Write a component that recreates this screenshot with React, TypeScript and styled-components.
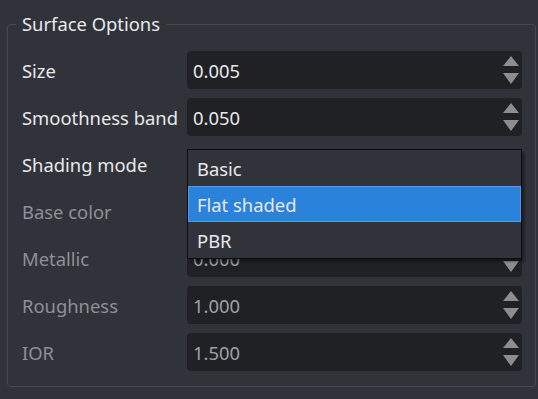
import React from "react";
import styled, { createGlobalStyle } from "styled-components";

const Global = createGlobalStyle`
  html, body { margin: 0; padding: 0; background: #31333b; }
  body { font-family: "Noto Sans", "Open Sans", sans-serif; font-size: 18.4px; color: #e8e8ea; }
  * { box-sizing: border-box; }
`;

const Page = styled.div`
  width: 538px;
  height: 399px;
  padding: 14px 2px 0 7px;
  background: #31333b;
`;

const Group = styled.fieldset`
  margin: 0;
  border: 1px solid #474952;
  border-radius: 4px;
  padding: 17px 13px 0 14px;
  height: 373px;
  min-width: 0;
`;

const Legend = styled.legend`
  padding: 0 6px 0 6px;
  margin-left: -6px;
  line-height: 20px;
  color: #e8e8ea;
`;

const Form = styled.div`
  display: grid;
  grid-template-columns: 165px 1fr;
  row-gap: 9px;
  align-items: center;
`;

const Label = styled.div<{ $disabled?: boolean }>`
  color: ${(p) => (p.$disabled ? "#8e9096" : "#e8e8ea")};
  white-space: nowrap;
`;

const SpinBox = styled.div<{ $disabled?: boolean }>`
  height: 38px;
  background: #202125;
  border-radius: 4px;
  display: flex;
  align-items: center;
  padding: 0 2px 0 6px;
  color: ${(p) => (p.$disabled ? "#9fa1a6" : "#e8e8ea")};
`;

const Value = styled.span`
  flex: 1;
`;

const Arrows = styled.svg`
  display: block;
  flex: none;
`;

const ComboAnchor = styled.div`
  position: relative;
  height: 38px;
`;

const Popup = styled.div`
  position: absolute;
  top: 4px;
  left: 0;
  right: 0;
  z-index: 2;
  background: #31333b;
  border: 1px solid #0c0c0e;
  box-shadow: 3px 3px 2px rgba(0, 0, 0, 0.35);
  display: flex;
  flex-direction: column;
`;

const Item = styled.div<{ $active?: boolean }>`
  height: 36px;
  display: flex;
  align-items: center;
  padding-left: 8px;
  color: #e8e8ea;
  background: ${(p) => (p.$active ? "#2a82da" : "transparent")};
  border: 1px solid ${(p) => (p.$active ? "#4c9ae8" : "transparent")};
`;

const Spin = ({ value, disabled }: { value: string; disabled?: boolean }) => (
  <SpinBox $disabled={disabled}>
    <Value>{value}</Value>
    <Arrows width="18" height="30" viewBox="0 0 18 30">
      <polygon points="9,1 17,11 1,11" fill="#8c8d91" />
      <polygon points="1,18 17,18 9,29" fill="#8c8d91" />
    </Arrows>
  </SpinBox>
);

export default function App() {
  return (
    <Page>
      <Global />
      <Group>
        <Legend>Surface Options</Legend>
        <Form>
          <Label>Size</Label>
          <Spin value="0.005" />
          <Label>Smoothness band</Label>
          <Spin value="0.050" />
          <Label>Shading mode</Label>
          <ComboAnchor>
            <Popup>
              <Item>Basic</Item>
              <Item $active>Flat shaded</Item>
              <Item>PBR</Item>
            </Popup>
          </ComboAnchor>
          <Label $disabled>Base color</Label>
          <ComboAnchor />
          <Label $disabled>Metallic</Label>
          <Spin value="0.000" disabled />
          <Label $disabled>Roughness</Label>
          <Spin value="1.000" disabled />
          <Label $disabled>IOR</Label>
          <Spin value="1.500" disabled />
        </Form>
      </Group>
    </Page>
  );
}
